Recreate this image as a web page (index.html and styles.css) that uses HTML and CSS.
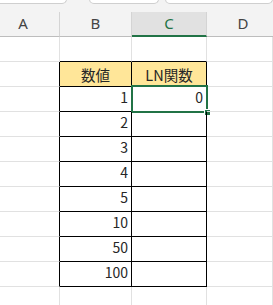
FILE: index.html
```html
<!DOCTYPE html>
<html lang="ja">
<head>
  <meta charset="UTF-8">
  <title>LN関数</title>
  <link rel="stylesheet" href="styles.css">
</head>
<body>

  <div class="tabs">
    <span class="tab tab-first"></span>
    <span class="tab tab-middle"></span>
    <span class="tab tab-last"></span>
  </div>

  <div class="sheet">
    <!-- column headers -->
    <div class="col-head col-a">A</div>
    <div class="col-head">B</div>
    <div class="col-head selected">C</div>
    <div class="col-head col-d">D</div>

    <!-- empty row -->
    <div class="cell"></div>
    <div class="cell above"></div>
    <div class="cell above"></div>
    <div class="cell"></div>

    <!-- table header -->
    <div class="cell edge"></div>
    <div class="cell box head">数値</div>
    <div class="cell box head">LN関数</div>
    <div class="cell"></div>

    <div class="cell edge"></div>
    <div class="cell box num">1</div>
    <div class="cell box num active">0<span class="cursor"><span class="handle"></span></span></div>
    <div class="cell"></div>

    <div class="cell edge"></div>
    <div class="cell box num">2</div>
    <div class="cell box num"></div>
    <div class="cell"></div>

    <div class="cell edge"></div>
    <div class="cell box num">3</div>
    <div class="cell box num"></div>
    <div class="cell"></div>

    <div class="cell edge"></div>
    <div class="cell box num">4</div>
    <div class="cell box num"></div>
    <div class="cell"></div>

    <div class="cell edge"></div>
    <div class="cell box num">5</div>
    <div class="cell box num"></div>
    <div class="cell"></div>

    <div class="cell edge"></div>
    <div class="cell box num">10</div>
    <div class="cell box num"></div>
    <div class="cell"></div>

    <div class="cell edge"></div>
    <div class="cell box num">50</div>
    <div class="cell box num"></div>
    <div class="cell"></div>

    <div class="cell edge"></div>
    <div class="cell box num">100</div>
    <div class="cell box num"></div>
    <div class="cell"></div>

    <!-- trailing row -->
    <div class="cell"></div>
    <div class="cell"></div>
    <div class="cell"></div>
    <div class="cell"></div>
  </div>

</body>
</html>
```

FILE: styles.css
```css
* {
  box-sizing: border-box;
}

body {
  margin: 0;
  width: 273px;
  height: 305px;
  overflow: hidden;
  background: #fff;
  font-family: "Noto Sans CJK JP", "Noto Sans", sans-serif;
  color: #262626;
}

.tabs {
  display: flex;
  height: 12px;
  background: #f3f3f3;
  overflow: hidden;
}

.tab {
  height: 5px;
  margin-top: -1px;
  background: #fff;
  border: 1px solid #cfcfcf;
  border-radius: 0 0 6px 6px;
}

.tab-first {
  width: 74px;
  margin-left: -6px;
}

.tab-middle {
  width: 72px;
  margin-left: 22px;
}

.tab-last {
  width: 110px;
  margin-left: 6px;
}

.sheet {
  display: grid;
  grid-template-columns: 60px 72px 75px 66px;
  grid-auto-rows: 25px;
}

.col-head {
  background: #f3f3f3;
  border-right: 1px solid #d4d4d4;
  border-bottom: 1px solid #bdbdbd;
  font-family: "Noto Sans", sans-serif;
  font-size: 15px;
  line-height: 23px;
  text-align: center;
  color: #444;
}

.col-a {
  padding-right: 13px;
}

.col-d {
  padding-left: 6px;
  border-right: none;
}

.col-head.selected {
  background: #e1e1e1;
  color: #217346;
  border-bottom: 2px solid #217346;
}

.cell {
  position: relative;
  border-right: 1px solid #e1e1e1;
  border-bottom: 1px solid #e1e1e1;
  font-size: 14px;
  line-height: 19px;
  padding: 0 3px;
  white-space: nowrap;
}

.cell.edge {
  border-right-color: #000;
}

.cell.above {
  border-bottom-color: #000;
}

.cell.box {
  border-right-color: #000;
  border-bottom-color: #000;
}

.head {
  background: #ffe699;
  text-align: center;
  font-size: 14.5px;
  padding-top: 3px;
}

.num {
  text-align: right;
  padding-top: 1px;
}

.cursor {
  position: absolute;
  left: -1px;
  top: -2px;
  width: 77px;
  height: 28px;
  border: 2px solid #217346;
}

.handle {
  position: absolute;
  right: -5px;
  bottom: -5px;
  width: 7px;
  height: 7px;
  background: #217346;
  border: 1px solid #fff;
}
```
